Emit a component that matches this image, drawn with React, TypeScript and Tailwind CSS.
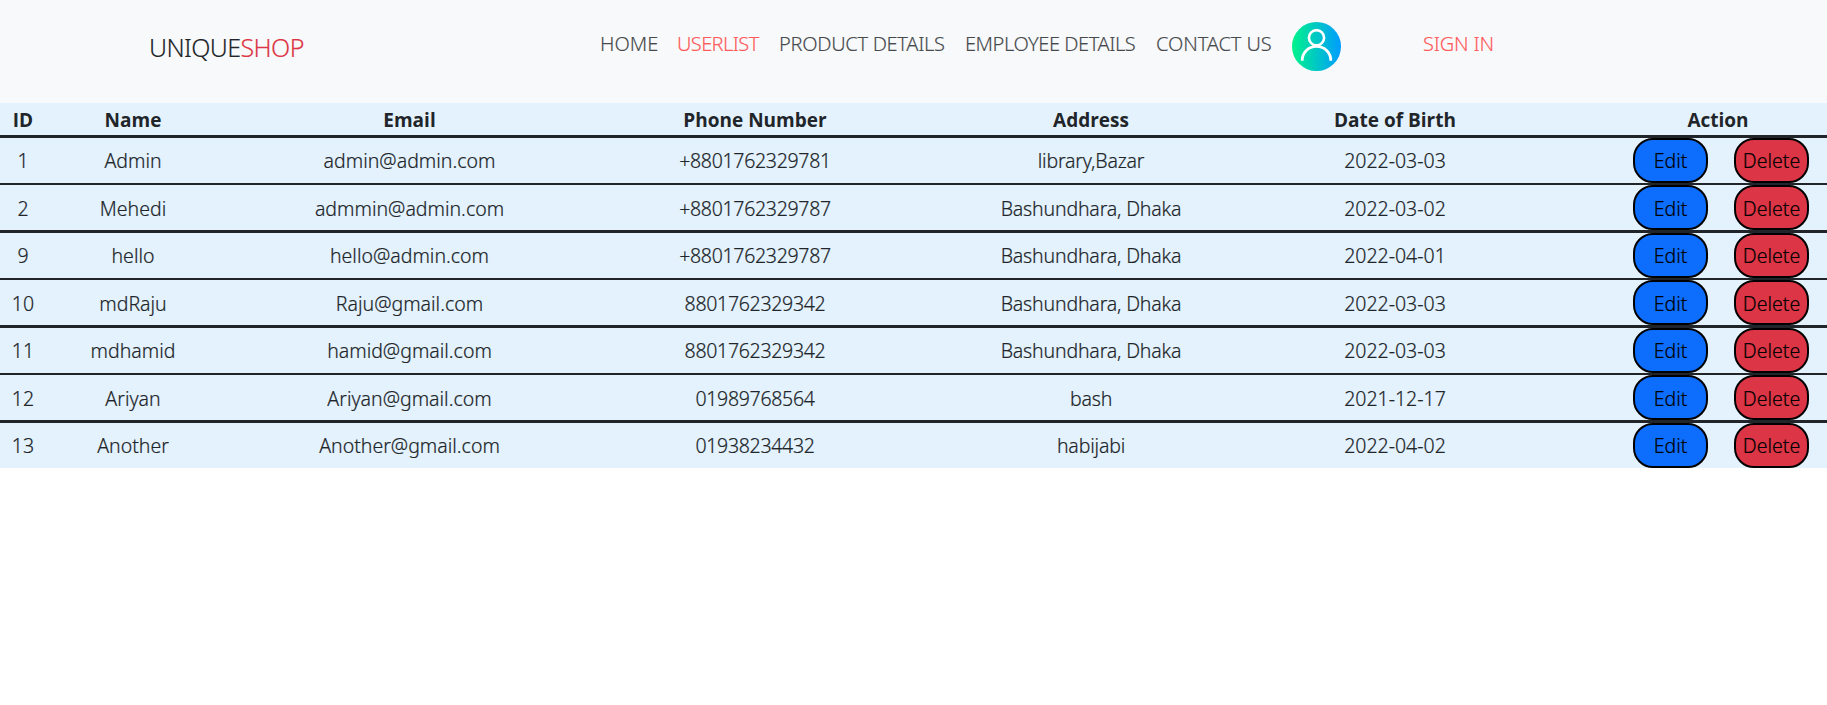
const links = [
  { label: "HOME", style: "w-[77px] text-[#474a4d]" },
  { label: "USERLIST", style: "w-[102px] text-[#ff5a5a] tracking-[-0.6px]" },
  { label: "PRODUCT DETAILS", style: "w-[186px] text-[#474a4d] tracking-[-0.3px]" },
  { label: "EMPLOYEE DETAILS", style: "w-[191px] text-[#474a4d] tracking-[-0.45px]" },
  { label: "CONTACT US", style: "w-[136px] text-[#474a4d] tracking-[-0.1px]" },
];

const users = [
  { id: 1, name: "Admin", email: "admin@admin.com", phone: "+8801762329781", address: "library,Bazar", dob: "2022-03-03" },
  { id: 2, name: "Mehedi", email: "admmin@admin.com", phone: "+8801762329787", address: "Bashundhara, Dhaka", dob: "2022-03-02" },
  { id: 9, name: "hello", email: "hello@admin.com", phone: "+8801762329787", address: "Bashundhara, Dhaka", dob: "2022-04-01" },
  { id: 10, name: "mdRaju", email: "Raju@gmail.com", phone: "8801762329342", address: "Bashundhara, Dhaka", dob: "2022-03-03" },
  { id: 11, name: "mdhamid", email: "hamid@gmail.com", phone: "8801762329342", address: "Bashundhara, Dhaka", dob: "2022-03-03" },
  { id: 12, name: "Ariyan", email: "Ariyan@gmail.com", phone: "01989768564", address: "bash", dob: "2021-12-17" },
  { id: 13, name: "Another", email: "Another@gmail.com", phone: "01938234432", address: "habijabi", dob: "2022-04-02" },
];

const columns = "grid grid-cols-[46px_174px_379px_312px_360px_248px_308px] text-center";

function Avatar() {
  return (
    <svg className="block size-[49px]" viewBox="0 0 49 49" fill="none">
      <defs>
        <linearGradient id="avatar" x1="0" y1="0" x2="1" y2="0">
          <stop offset="0" stopColor="#00f38a" />
          <stop offset="1" stopColor="#009cff" />
        </linearGradient>
      </defs>
      <circle cx="24.5" cy="24.5" r="24.5" fill="url(#avatar)" />
      <circle cx="24.5" cy="15.7" r="7.6" stroke="white" strokeWidth="2.6" />
      <path d="M10.2 38.8C10.2 30.6 16.4 24.4 24.5 24.4S38.8 30.6 38.8 38.8" stroke="white" strokeWidth="2.8" />
    </svg>
  );
}

function Navbar() {
  return (
    <header className="flex h-[103px] bg-[#f8f9fa] font-light [-webkit-text-stroke:0.15px]">
      <div className="w-[600px] pl-[149px] pt-[29px] text-[25px] leading-9">
        <span className="tracking-[-0.6px]">UNIQUE</span>
        <span className="text-[#dc3545] tracking-[-0.6px]">SHOP</span>
      </div>
      <nav className="flex">
        {links.map((l) => (
          <a key={l.label} className={`whitespace-nowrap pt-[29px] text-[20px] leading-[30px] ${l.style}`}>{l.label}</a>
        ))}
        <div className="mr-[82px] mt-[22px]"><Avatar /></div>
        <a className="pt-[29px] text-[20px] leading-[30px] tracking-[-0.2px] text-[#ff5a5a]">SIGN IN</a>
      </nav>
    </header>
  );
}

const button = "h-[45px] w-[75px] rounded-[20px] border-2 border-black text-center text-black";

export default function App() {
  return (
    <div className="min-h-screen overflow-hidden bg-white font-['Noto_Sans',sans-serif] text-[#212529]">
      <Navbar />
      <div className="bg-[#e3f2fd]">
        <div className={`${columns} h-[35px] border-b-[3px] border-[#212529] pt-[2px] font-['Open_Sans',sans-serif] text-[19px] font-bold leading-[30px]`}>
          <span>ID</span>
          <span>Name</span>
          <span>Email</span>
          <span>Phone Number</span>
          <span>Address</span>
          <span>Date of Birth</span>
          <span className="pl-[90px]">Action</span>
        </div>
        {users.map((u, i) => {
          const last = i === users.length - 1;
          const even = i % 2 === 1;
          const line = last ? "h-[45px]" : even ? "h-[48px] border-b-[3px]" : "h-[47px] border-b-2";
          const pad = even ? "pt-[9px]" : "pt-[8px]";
          const buttonPad = even ? "pt-[3px]" : "pt-[1px]";
          return (
            <div key={u.id} className={`${columns} border-[#212529] text-[19.5px] font-light leading-[30px] [-webkit-text-stroke:0.2px] ${line}`}>
              <span className={pad}>{u.id}</span>
              <span className={pad}>{u.name}</span>
              <span className={pad}>{u.email}</span>
              <span className={`${pad} tracking-[-0.3px]`}>{u.phone}</span>
              <span className={`${pad} tracking-[-0.17px]`}>{u.address}</span>
              <span className={pad}>{u.dob}</span>
              <div className="flex justify-end gap-[26px] pr-[18px]">
                <button className={`${button} bg-[#0d6efd] ${buttonPad}`}>Edit</button>
                <button className={`${button} bg-[#dc3545] ${buttonPad}`}>Delete</button>
              </div>
            </div>
          );
        })}
      </div>
    </div>
  );
}
